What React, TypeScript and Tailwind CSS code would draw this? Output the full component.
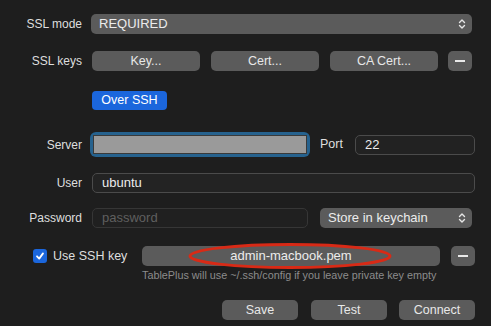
import React from "react";

const Chevrons = () => (
  <svg width="8" height="12" viewBox="0 0 8 12" fill="none" stroke="#e6e6e6" strokeWidth="1.4" strokeLinecap="round" strokeLinejoin="round">
    <path d="M1.5 4.5 L4 2 L6.5 4.5" />
    <path d="M1.5 7.5 L4 10 L6.5 7.5" />
  </svg>
);

const Btn = ({ w, children }: { w: string; children: React.ReactNode }) => (
  <div className={`${w} h-[20px] rounded-[5px] bg-[#5b5b5b] flex items-center justify-center text-[12.5px] text-[#e8e8e8]`}>
    {children}
  </div>
);

const Minus = () => (
  <div className="w-[24px] h-[20px] rounded-[5px] bg-[#5b5b5b] flex items-center justify-center">
    <div className="w-[10px] h-[1.5px] bg-[#e8e8e8]" />
  </div>
);

const Label = ({ children }: { children: React.ReactNode }) => (
  <div className="w-[82px] text-right text-[12px] text-[#dedede] shrink-0">{children}</div>
);

export default function App() {
  return (
    <div
      className="relative w-[491px] h-[326px] bg-[#1e1e1e] pt-[14px] overflow-hidden"
      style={{ fontFamily: '"Liberation Sans", Arial, sans-serif' }}
    >
      {/* SSL mode */}
      <div className="flex items-center h-[20px]">
        <Label>SSL mode</Label>
        <div className="ml-[9px] w-[381px] h-[20px] rounded-[5px] bg-[#5b5b5b] flex items-center justify-between pl-[8px] pr-[6px] text-[13px] text-[#ececec]">
          <span>REQUIRED</span>
          <Chevrons />
        </div>
      </div>

      {/* SSL keys */}
      <div className="flex items-center h-[20px] mt-[17px]">
        <Label>SSL keys</Label>
        <div className="ml-[10px] flex items-center">
          <Btn w="w-[108px]">Key...</Btn>
          <div className="ml-[11px]"><Btn w="w-[108px]">Cert...</Btn></div>
          <div className="ml-[11px]"><Btn w="w-[108px]">CA Cert...</Btn></div>
          <div className="ml-[10px]"><Minus /></div>
        </div>
      </div>

      {/* Over SSH */}
      <div className="mt-[20px] ml-[92px] w-[75px] h-[19px] rounded-[4px] bg-[#1b66dc] flex items-center justify-center text-[12.5px] text-white">
        Over SSH
      </div>

      {/* Server */}
      <div className="flex items-center h-[25px] mt-[22px]">
        <Label>Server</Label>
        <div className="ml-[8px] w-[220px] h-[25px] rounded-[6px] bg-[#26628e] p-[3px]">
          <div className="w-full h-full bg-[#9a9a9a] border border-[#3a3a3a]" />
        </div>
        <div className="ml-[10px] text-[12.5px] text-[#dedede]">Port</div>
        <div className="ml-[12px] w-[120px] h-[20px] rounded-[5px] border border-[#4b4b4b] bg-[#222222] flex items-center pl-[9px] text-[13px] text-[#ececec]">
          22
        </div>
      </div>

      {/* User */}
      <div className="flex items-center h-[20px] mt-[16px]">
        <Label>User</Label>
        <div className="ml-[10px] w-[383px] h-[20px] rounded-[5px] border border-[#4b4b4b] bg-[#232323] flex items-center pl-[9px] text-[13px] text-[#ececec]">
          ubuntu
        </div>
      </div>

      {/* Password */}
      <div className="flex items-center h-[20px] mt-[15px]">
        <Label>Password</Label>
        <div className="ml-[10px] w-[216px] h-[20px] rounded-[5px] border border-[#363636] bg-[#202020] flex items-center pl-[9px] text-[13px] text-[#5f5f5f]">
          password
        </div>
        <div className="ml-[12px] w-[152px] h-[20px] rounded-[5px] bg-[#5b5b5b] flex items-center justify-between pl-[8px] pr-[6px] text-[13px] text-[#ececec]">
          <span>Store in keychain</span>
          <Chevrons />
        </div>
      </div>

      {/* Use SSH key */}
      <div className="relative flex items-center h-[20px] mt-[18px] pl-[33px]">
        <div className="w-[14px] h-[14px] rounded-[3px] bg-[#1b66dc] flex items-center justify-center shrink-0">
          <svg width="10" height="10" viewBox="0 0 10 10" fill="none" stroke="white" strokeWidth="1.8" strokeLinecap="round" strokeLinejoin="round">
            <path d="M2 5.3 L4.2 7.6 L8 2.4" />
          </svg>
        </div>
        <div className="ml-[6px] w-[89px] text-[12.5px] text-[#dedede] shrink-0">Use SSH key</div>
        <div className="w-[298px] h-[20px] rounded-[5px] bg-[#5b5b5b] flex items-center justify-center text-[13px] text-[#ececec]">
          admin-macbook.pem
        </div>
        <div className="ml-[11px]"><Minus /></div>
        <svg className="absolute left-[187px] top-[-4px]" width="206" height="28" viewBox="0 0 206 28" fill="none">
          <ellipse cx="103" cy="14" rx="100" ry="11.5" stroke="#d82a16" strokeWidth="3" />
        </svg>
      </div>

      <div className="ml-[142px] mt-[1px] text-[10.8px] text-[#8c8c8c]">
        TablePlus will use ~/.ssh/config if you leave private key empty
      </div>

      {/* Actions */}
      <div className="flex items-center mt-[17px] ml-[222px]">
        <Btn w="w-[76px]">Save</Btn>
        <div className="ml-[13px]"><Btn w="w-[76px]">Test</Btn></div>
        <div className="ml-[12px]"><Btn w="w-[76px]">Connect</Btn></div>
      </div>
    </div>
  );
}
